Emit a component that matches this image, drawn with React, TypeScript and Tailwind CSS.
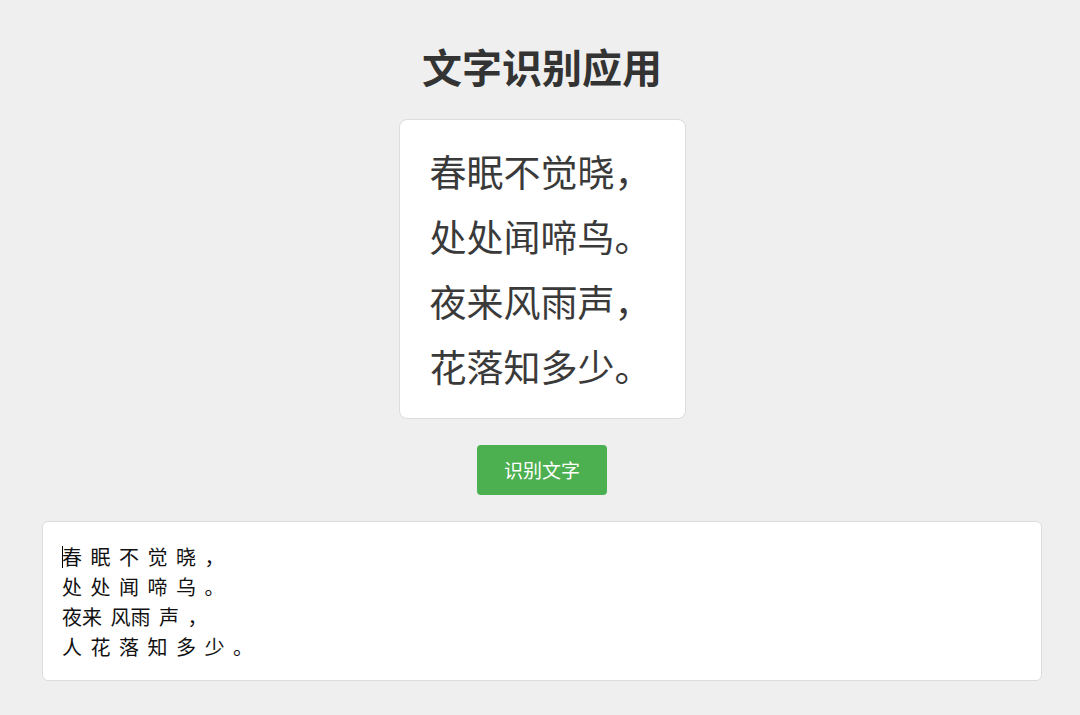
const poem = ['春眠不觉晓，', '处处闻啼鸟。', '夜来风雨声，', '花落知多少。'];

const result = ['春 眠 不 觉 晓 ，', '处 处 闻 啼 乌 。', '夜来 风雨 声 ，', '人 花 落 知 多 少 。'];

export default function App() {
  return (
    <div className="min-h-[715px] bg-[#efefef] font-['Noto_Sans_CJK_SC','Noto_Sans',sans-serif]">
      <div className="flex flex-col items-center pt-[42px] pl-[4px]">
        {/* Title */}
        <h1 className="text-[40px] leading-[48px] font-bold text-[#333]">文字识别应用</h1>

        {/* Source image (poem) */}
        <div className="mt-[29px] w-[287px] h-[300px] bg-white border border-[#dcdcdc] rounded-[8px] pl-[30px] pt-[19px]">
          {poem.map((line) => (
            <div key={line} className="text-[37px] leading-[65px] text-[#3a3a3a] whitespace-nowrap">
              {line}
            </div>
          ))}
        </div>

        {/* Button */}
        <button className="mt-[26px] w-[130px] h-[50px] rounded-[4px] bg-[#4caf50] text-white text-[19px]">
          识别文字
        </button>

        {/* Result area */}
        <div className="mt-[26px] w-[1000px] h-[160px] bg-white border border-[#dcdcdc] rounded-[6px] px-[19px] py-[20px]">
          {result.map((line, i) => (
            <div key={i} className="relative text-[20px] leading-[30px] text-[#111] whitespace-pre [word-spacing:4px]">
              {i === 0 && <span className="absolute left-0 top-[4px] w-px h-[22px] bg-black" />}
              {line}
            </div>
          ))}
        </div>
      </div>
    </div>
  );
}
